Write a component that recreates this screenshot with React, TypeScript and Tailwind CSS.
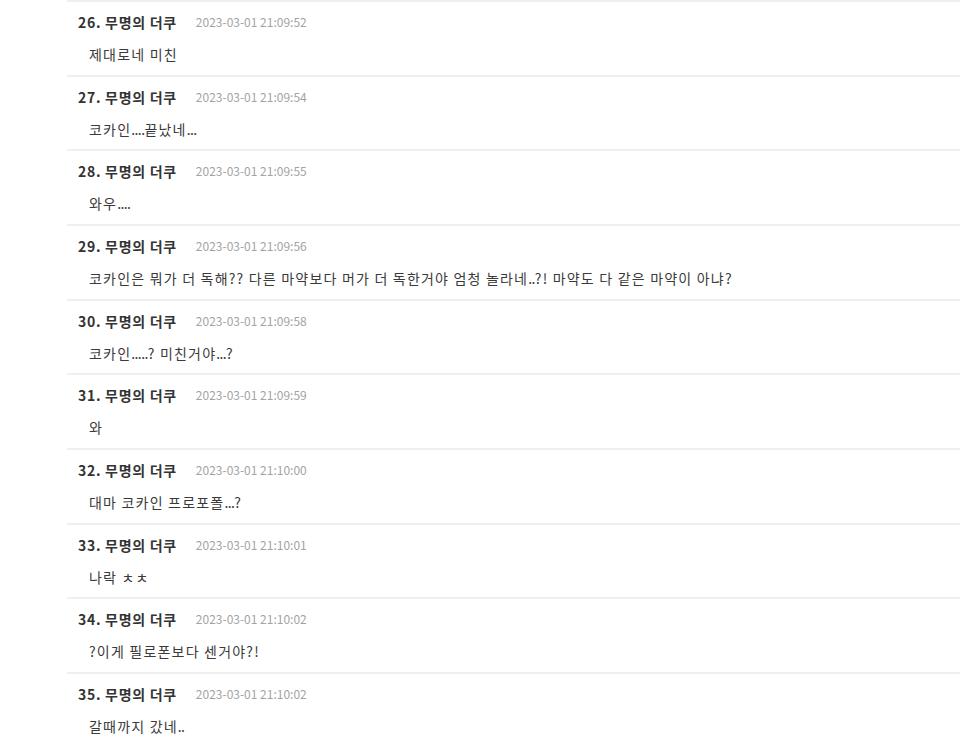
import React from "react";

const rows: [number, string, string][] = [
  [26, "2023-03-01 21:09:52", "제대로네 미친"],
  [27, "2023-03-01 21:09:54", "코카인....끝났네..."],
  [28, "2023-03-01 21:09:55", "와우...."],
  [29, "2023-03-01 21:09:56", "코카인은 뭐가 더 독해?? 다른 마약보다 머가 더 독한거야 엄청 놀라네..?! 마약도 다 같은 마약이 아냐?"],
  [30, "2023-03-01 21:09:58", "코카인.....? 미친거야...?"],
  [31, "2023-03-01 21:09:59", "와"],
  [32, "2023-03-01 21:10:00", "대마 코카인 프로포폴...?"],
  [33, "2023-03-01 21:10:01", "나락 ㅊㅊ"],
  [34, "2023-03-01 21:10:02", "?이게 필로폰보다 센거야?!"],
  [35, "2023-03-01 21:10:02", "갈때까지 갔네.."],
];

function Body({ text }: { text: string }) {
  const parts = text.split(/(\.+)/);
  return (
    <>
      {parts.map((p, i) =>
        p.startsWith(".") ? (
          <span key={i} className="tracking-[-0.6px]">
            {p}
          </span>
        ) : (
          <span key={i}>{p}</span>
        )
      )}
    </>
  );
}

export default function App() {
  return (
    <div
      className="w-[960px] h-[743px] overflow-hidden bg-white pl-[67px]"
      style={{ fontFamily: '"Noto Sans CJK KR", "Noto Sans", sans-serif' }}
    >
      {rows.map(([n, date, body]) => (
        <div key={n} className="border-t-2 border-[#efefef] h-[74.67px] pt-[10px] pl-[11px]">
          <div className="flex items-center h-[20px]">
            <span className="text-[14px] font-bold text-[#333333] leading-[20px] tracking-[0.7px]">
              {n}. 무명의 더쿠
            </span>
            <span className="ml-[19px] text-[12px] text-[#a3a3a3] leading-[20px]">
              {date}
            </span>
          </div>
          <div className="mt-[12px] pl-[11px] text-[14px] text-[#3a3a3a] leading-[20px] tracking-[1.2px]">
            <Body text={body} />
          </div>
        </div>
      ))}
    </div>
  );
}
